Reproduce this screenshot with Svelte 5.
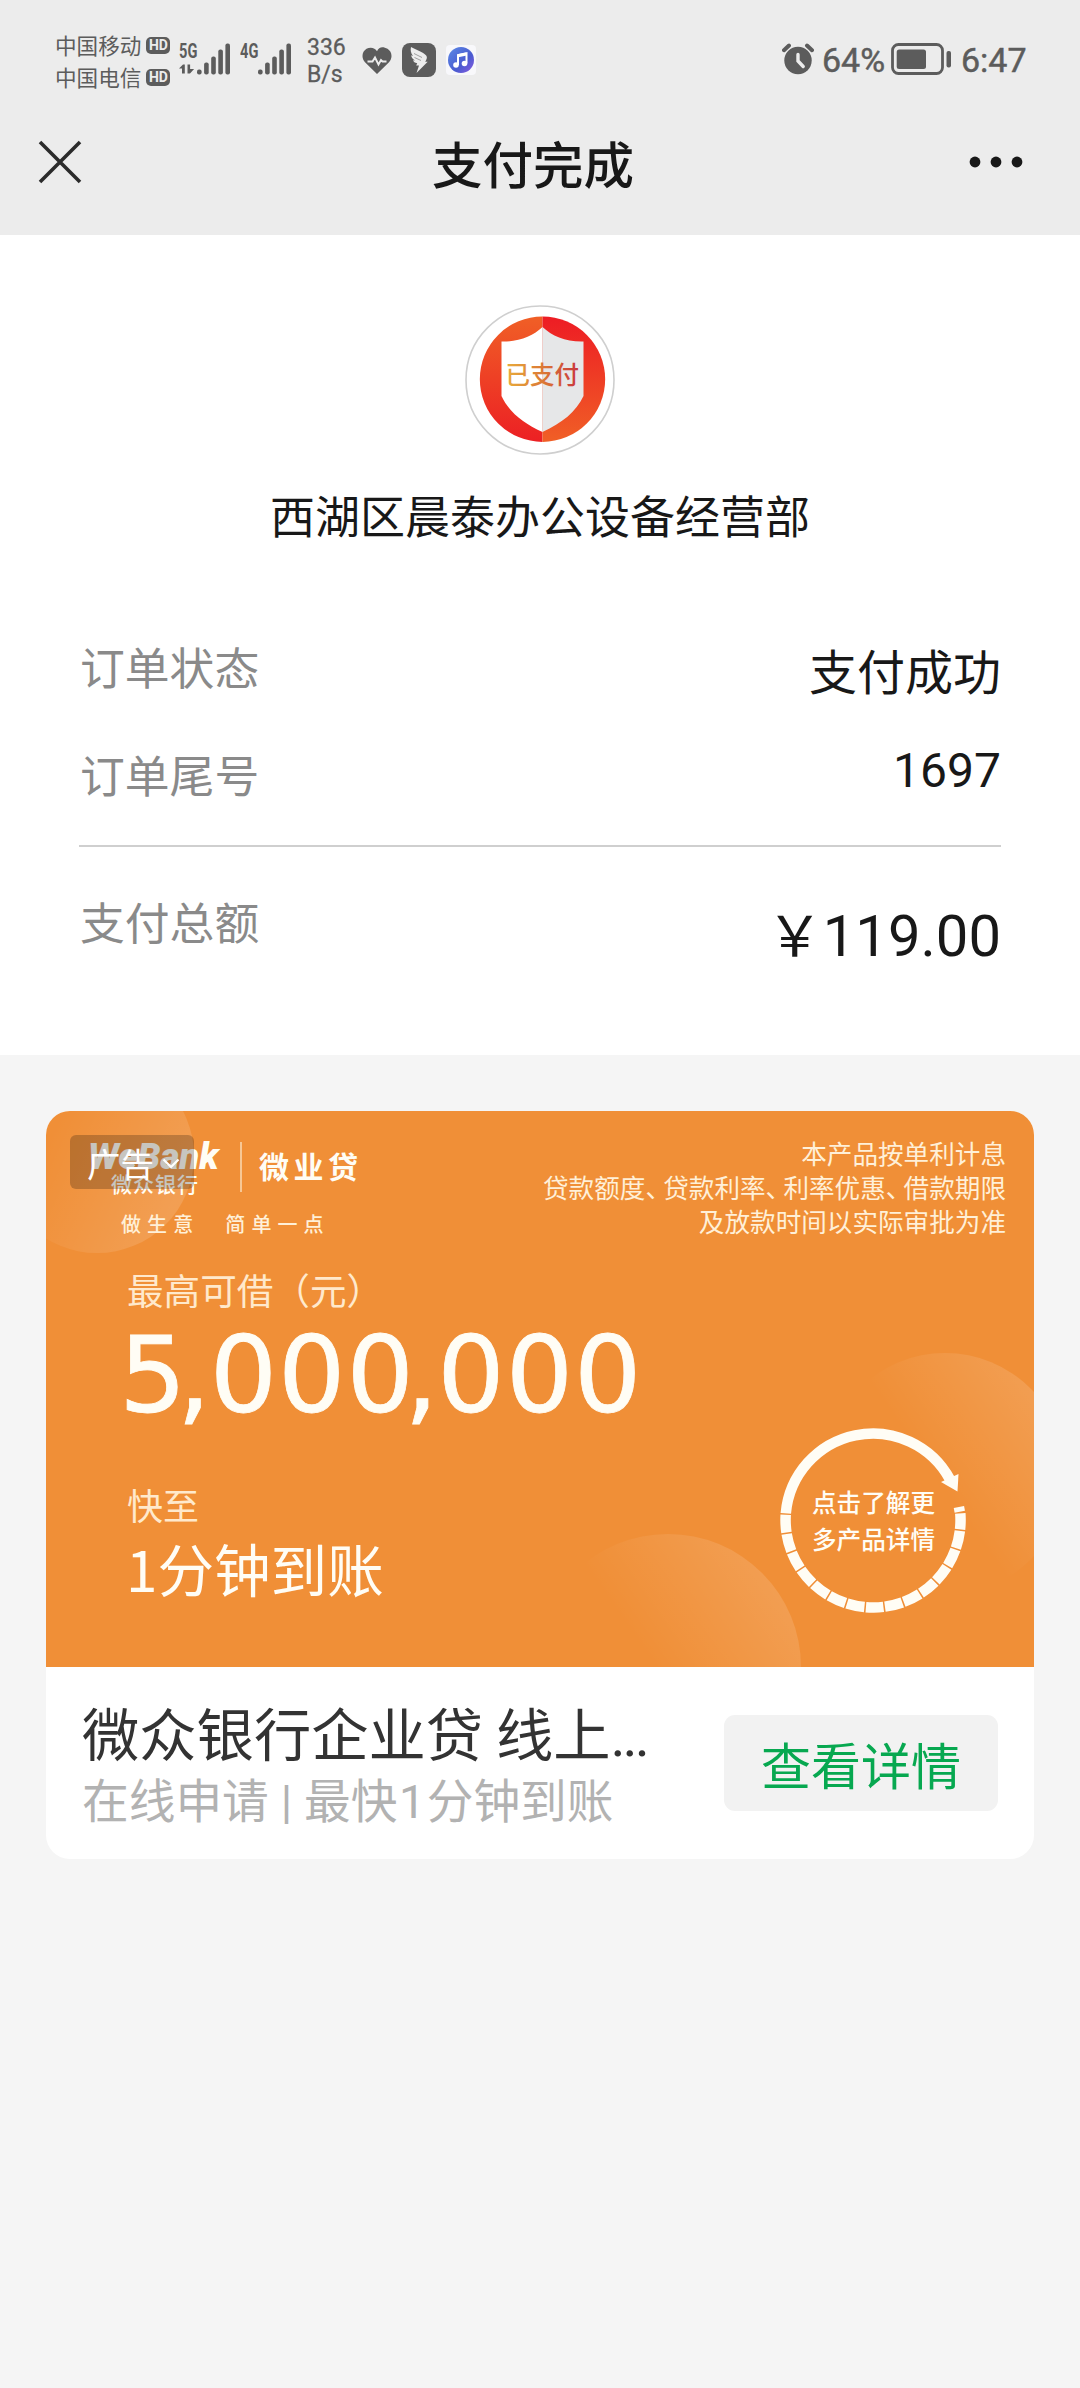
<script>
  const bars = [0, 1, 2, 3, 4];
  const heights = [5, 12, 18, 25, 31];
  const carriers = ['中国移动', '中国电信'];
  const orders = [
    { label: '订单状态', value: '支付成功', kind: 'state' },
    { label: '订单尾号', value: '1697', kind: 'tail' }
  ];
</script>

{#snippet signal()}
  <svg class="signal" width="36" height="32" viewBox="0 0 36 32">
    {#each bars as b}
      <rect x={1 + b * 7.1} y={31.5 - heights[b]} width="4.6" height={heights[b]} rx="2" fill="#5c5c5c" />
    {/each}
  </svg>
{/snippet}

<div class="screen">
  <header>
    <div class="status">
      <div class="carriers">
        {#each carriers as c}
          <div class="carrier"><span>{c}</span><b>HD</b></div>
        {/each}
      </div>
      <div class="net first">
        <span class="gen">5G</span>
        <svg class="updown" width="16" height="10" viewBox="0 0 16 10"><path d="M0 4.5 4 .5h1.8V9.5H3V4.5ZM8.5.5h2.6v4.4h4L11 9.5H8.5Z" fill="#5c5c5c" /></svg>
        {@render signal()}
      </div>
      <div class="net second">
        <span class="gen">4G</span>
        {@render signal()}
      </div>
      <div class="speed"><span>336</span><span>B/s</span></div>
      <svg class="heart" width="30" height="28" viewBox="0 0 30 28">
        <path d="M15 27 3 15.2C-1 11 0 4.500 4.500 1.800 8.500-.5 13 .8 15 4.200 17-.8 21.500-.5 25.500 1.800 30 4.500 31 11 27 15.200Z" fill="#5c5c5c" />
        <path d="M5.500 14.500h5l2.500-4 3.500 7 2.500-4.500 1.500 1.500h4" fill="none" stroke="#ececec" stroke-width="1.900" />
      </svg>
      <svg class="bird" width="34" height="34" viewBox="0 0 34 34">
        <rect width="34" height="34" rx="8" fill="#5c5c5c" />
        <path d="M9 4c5 3 12 5 15.200 8.500 1.600 2 .2 4.200-1 6.200h2.500L14.500 30l2.500-7.500h-2.800l1-2.200c-2.500-.5-3.600-1.500-4.200-3l2 .2c-2.600-1.500-3.600-3.200-3.800-5.200l1.800.8C8.700 10 8.300 7 9 4Z" fill="#ececec" />
        <path d="M12 10.500l8 4M12.500 14.500l6.500 3" stroke="#8a8a8a" stroke-width=".8" />
      </svg>
      <svg class="music" width="30" height="30" viewBox="0 0 30 30">
        <defs><linearGradient id="mg" x1="0" y1="0" x2="1" y2="1"><stop offset="0" stop-color="#5c8ae6" /><stop offset=".6" stop-color="#4a5bd0" /><stop offset="1" stop-color="#8a5be0" /></linearGradient></defs>
        <rect width="30" height="30" rx="4" fill="#f8f8fb" />
        <circle cx="15" cy="15" r="13" fill="url(#mg)" />
        <path d="M12 20V10l8.500-1.800v10" fill="none" stroke="#fff" stroke-width="2" />
        <path d="M12 10.800 20.500 9" stroke="#fff" stroke-width="3" />
        <circle cx="10" cy="20" r="2.800" fill="#fff" /><circle cx="18.500" cy="18.500" r="2.800" fill="#fff" />
      </svg>
      <div class="gap"></div>
      <svg class="alarm" width="32" height="32" viewBox="0 0 32 32">
        <circle cx="16" cy="17.500" r="13.700" fill="#5c5c5c" />
        <path d="M2 7.200 7 2.500M30 7.200 25 2.500" stroke="#5c5c5c" stroke-width="4" stroke-linecap="round" />
        <path d="M16 11.500v6.500l5.200 5.500" fill="none" stroke="#ececec" stroke-width="3.400" stroke-linecap="round" />
      </svg>
      <span class="pct">64%</span>
      <svg class="battery" width="61" height="32" viewBox="0 0 61 32">
        <rect x="1.500" y="1.500" width="50" height="29" rx="6" fill="none" stroke="#5c5c5c" stroke-width="2.800" />
        <rect x="5.700" y="6.500" width="29.300" height="19.500" rx="2.500" fill="#5c5c5c" />
        <rect x="55.500" y="8" width="4.500" height="16.500" rx="2" fill="#5c5c5c" />
      </svg>
      <span class="time">6:47</span>
    </div>
    <div class="nav">
      <svg width="44" height="44" viewBox="0 0 44 44"><path d="M2 2 42 42M42 2 2 42" stroke="#2b2b2b" stroke-width="3.600" /></svg>
      <h1>支付完成</h1>
      <svg width="54" height="12" viewBox="0 0 54 12"><circle cx="6" cy="6" r="5.400" fill="#181818" /><circle cx="27" cy="6" r="5.400" fill="#181818" /><circle cx="48" cy="6" r="5.400" fill="#181818" /></svg>
    </div>
  </header>

  <section class="receipt">
    <svg class="avatar" width="150" height="150" viewBox="0 0 150 150">
      <defs>
        <linearGradient id="left" x1="0" y1="0" x2="0" y2="1"><stop offset="0" stop-color="#f05f26" /><stop offset="1" stop-color="#ec2024" /></linearGradient>
        <linearGradient id="right" x1="0" y1="0" x2="0" y2="1"><stop offset="0" stop-color="#ed1c24" /><stop offset="1" stop-color="#f05f26" /></linearGradient>
        <linearGradient id="word" x1="0" y1="0" x2="1" y2="0"><stop offset="0" stop-color="#e8ac3c" /><stop offset=".5" stop-color="#dc7a35" /><stop offset="1" stop-color="#c9363c" /></linearGradient>
      </defs>
      <circle cx="75" cy="75" r="74" fill="#fff" stroke="#cfcfcf" stroke-width="1.600" />
      <path d="M77.500 11.500a62.700 62.700 0 0 0 0 125.400Z" fill="url(#left)" />
      <path d="M77.500 11.500a62.700 62.700 0 0 1 0 125.400Z" fill="url(#right)" />
      <path d="M77.500 22C68 31 54 37 36.500 36.500V91C44 107 58 118 77.500 127Z" fill="#fff" />
      <path d="M77.500 22C87 31 101 37 118.500 36.500V91C111 107 97 118 77.500 127Z" fill="#e6e7e8" />
      <text x="40.500" y="79" class="paid" fill="url(#word)">已支付</text>
    </svg>
    <h2>西湖区晨泰办公设备经营部</h2>
    <div class="rows">
      {#each orders as o}
        <div class="row"><span class="label">{o.label}</span><span class={o.kind}>{o.value}</span></div>
      {/each}
    </div>
    <div class="row total"><span class="label">支付总额</span><span class="amount"><i>￥</i>119.00</span></div>
  </section>

  <article class="card">
    <div class="banner">
      <svg class="decor" width="988" height="556" viewBox="0 0 988 556">
        <defs>
          <linearGradient id="d1" x1=".35" y1=".2" x2="1" y2=".5"><stop offset="0" stop-color="#fff" stop-opacity="0" /><stop offset="1" stop-color="#fff" stop-opacity=".14" /></linearGradient>
          <linearGradient id="d2" x1=".45" y1=".5" x2=".88" y2=".2"><stop offset="0" stop-color="#fff" stop-opacity="0" /><stop offset="1" stop-color="#fff" stop-opacity=".13" /></linearGradient>
        </defs>
        <circle cx="51" cy="45" r="97" fill="url(#d1)" />
        <circle cx="899" cy="363" r="121" fill="url(#d2)" />
        <circle cx="622" cy="556" r="133" fill="url(#d2)" />
        <g fill="none" stroke="#fffdf5" stroke-width="10.500">
          <path d="M739.800 402.400A87.500 87.500 0 0 1 904 368.500" />
          <path d="M739.700 403.800A87.500 87.500 0 1 0 914.300 402.400" stroke-dasharray="17.800 1.500" />
          <path d="M913.800 400.700 912.900 396" />
        </g>
        <path d="M895 371 912.500 363 911.500 380.500Z" fill="#fffdf5" />
      </svg>
      <div class="head">
        <div class="bank"><strong>WeBank</strong><span>微众银行</span></div>
        <div class="bar"></div>
        <div class="product">微业贷</div>
        <p class="terms">本产品按单利计息<br />贷款额度<i>、</i>贷款利率<i>、</i>利率优惠<i>、</i>借款期限<br />及放款时间以实际审批为准</p>
      </div>
      <p class="slogan"><span>做生意</span><span>简单一点</span></p>
      <p class="max">最高可借（元）</p>
      <p class="sum">5<i>,</i>000<i>,</i>000</p>
      <p class="fast">快至</p>
      <p class="minute">1分钟到账</p>
      <div class="adtag">广告<svg width="18" height="11" viewBox="0 0 18 11"><path d="M1.500 1.500 9 9l7.500-7.500" fill="none" stroke="#fff" stroke-width="2.200" /></svg></div>
      <div class="more">点击了解更<br />多产品详情</div>
    </div>
    <footer>
      <div class="copy"><h3>微众银行企业贷 线上<i>...</i></h3><p>在线申请 <i>|</i> 最快<i>1</i>分钟到账</p></div>
      <button>查看详情</button>
    </footer>
  </article>
</div>

<style>
  :global(body) { margin: 0; background: #f5f5f5; }
  .screen { width: 1080px; height: 2388px; overflow: hidden; background: #f5f5f5; font-family: "Noto Sans CJK SC", sans-serif; color: #181818; }
  h1, h2, h3, p { margin: 0; font-weight: 400; }
  i { font-style: normal; }
  svg { display: block; flex: none; }
  span { white-space: nowrap; }
  header { height: 235px; background: #ececec; }
  .status { height: 120px; display: flex; align-items: flex-start; color: #5c5c5c; padding: 0 54px 0 55px; box-sizing: border-box; }
  .carriers { width: 124px; padding-top: 29px; }
  .carrier { display: flex; height: 32px; align-items: center; font-size: 21.600px; line-height: 32px; }
  .carrier b { font: 700 14px/16px Roboto, sans-serif; color: #ececec; background: #5c5c5c; border-radius: 5px; width: 24px; height: 17px; text-align: center; margin-left: 5px; }
  .net { display: grid; grid-template-columns: 17px 36px; padding-top: 43px; }
  .net .signal { grid-row: 1 / 3; grid-column: 2; }
  .first { width: 61px; }
  .second { width: 67px; }
  .gen { font: 700 20px/16px Roboto, sans-serif; transform: scaleX(.73); transform-origin: left; }
  .updown { grid-row: 2; grid-column: 1; margin-top: 4px; }
  .speed { width: 55px; padding-top: 32px; display: flex; flex-direction: column; font: 400 23px/32px Roboto, sans-serif; -webkit-text-stroke: .3px #5c5c5c; }
  .speed span { height: 27px; }
  .heart { margin-top: 47px; }
  .bird { margin: 43px 0 0 10px; }
  .music { margin: 45px 0 0 10px; }
  .gap { flex: 1; }
  .alarm { margin-top: 43px; }
  .pct, .time { font: 400 34px/40px Roboto, sans-serif; margin-top: 40px; -webkit-text-stroke: .5px #5c5c5c; }
  .pct { width: 69px; margin-left: 8px; }
  .battery { margin-top: 43px; }
  .time { margin-left: 9px; width: 65px; }
  .nav { display: flex; align-items: center; height: 84px; padding: 0 57px 0 38px; justify-content: space-between; }
  .nav h1 { font-size: 50.500px; line-height: 84px; font-weight: 500; padding-left: 15px; }
  .receipt { height: 820px; background: #fff; box-sizing: border-box; padding: 70px 79px 0; }
  .avatar { margin: 0 auto 0 386px; }
  .paid { font: 500 24.500px "Noto Sans CJK SC", sans-serif; }
  .receipt h2 { text-align: center; font-size: 45px; line-height: 60px; margin-top: 30px; }
  .rows { margin-top: 91px; height: 211px; border-bottom: 2px solid #cfcfcf; box-sizing: border-box; }
  .row { display: flex; justify-content: space-between; height: 108px; align-items: flex-start; }
  .label { font-size: 44.800px; line-height: 60px; color: #8a8a8a; margin-left: 1px; }
  .state { font-size: 48px; line-height: 66px; }
  .tail { font: 400 48px/54px Roboto, sans-serif; }
  .total { padding-top: 44px; height: auto; }
  .amount { font: 400 58px/70px Roboto, sans-serif; margin-top: 10px; }
  .amount i { font: 400 56px/60px "Noto Sans CJK SC", sans-serif; }
  .card { width: 988px; height: 748px; margin: 56px auto 0; background: #fff; border-radius: 24px; overflow: hidden; }
  .banner { height: 556px; background: #f08f37; position: relative; color: #fffdf5; box-sizing: border-box; padding: 24px 28px 0 42px; }
  .decor { position: absolute; left: 0; top: 0; }
  .head { display: flex; position: relative; height: 78px; }
  .bank { width: 152px; padding-top: 7px; }
  .bank strong { display: block; font: italic 900 36.500px/30px Roboto, sans-serif; white-space: nowrap; }
  .bank span { display: block; font-size: 21px; line-height: 22px; margin-left: 23px; letter-spacing: 1px; font-weight: 500; }
  .bar { width: 2px; height: 50px; background: #f7c795; margin-top: 7px; }
  .product { font-size: 30px; font-weight: 700; line-height: 40px; letter-spacing: 4.500px; margin: 10px 0 0 17px; white-space: nowrap; }
  .terms { margin-left: auto; text-align: right; font-size: 25.600px; line-height: 34px; color: #fff0d8; padding-top: 1px; white-space: nowrap; }
  .terms i { margin-right: -7.800px; }
  .slogan { position: relative; display: flex; gap: 26px; font-size: 20px; line-height: 22px; height: 26px; letter-spacing: 6.100px; color: #fff0d8; margin-left: 33px; font-weight: 500; }
  .max { position: relative; font-size: 36.600px; line-height: 46px; color: #ffe9cc; margin: 28px 0 0 39px; }
  .sum { position: relative; font: 400 106px/110px "DejaVu Sans", sans-serif; letter-spacing: 1px; margin: 8px 0 0 31px; white-space: nowrap; -webkit-text-stroke: .8px #fffdf5; }
  .sum i { margin: 0 -2px 0 -10.500px; }
  .fast { position: relative; font-size: 36px; line-height: 46px; color: #ffe9cc; margin: 50px 0 0 39px; }
  .minute { position: relative; font-size: 56.600px; line-height: 70px; margin: 5px 0 0 38px; }
  .adtag { position: absolute; left: 24px; top: 24px; width: 124px; height: 54px; box-sizing: border-box; background: rgba(0, 0, 0, .22); border-radius: 6px; display: flex; align-items: center; padding: 2px 0 0 17px; font-size: 33.500px; line-height: 54px; color: #fff; }
  .adtag svg { margin-left: 8px; }
  .more { position: absolute; left: 766px; top: 372px; font-size: 24.600px; line-height: 37px; white-space: nowrap; font-weight: 500; }
  footer { height: 192px; display: flex; justify-content: space-between; padding: 0 36px; box-sizing: border-box; }
  .copy { padding-top: 29px; }
  .copy h3 { font-size: 57.300px; line-height: 72px; color: #333; white-space: nowrap; }
  .copy h3 i { font-family: Roboto, sans-serif; letter-spacing: -3px; }
  .copy p { font-size: 46.700px; line-height: 58px; margin-top: -4px; color: #b2b2b2; white-space: nowrap; }
  .copy p i { font-family: Roboto, sans-serif; margin: 0 1.500px; }
  button { margin-top: 48px; width: 274px; height: 96px; border: 0; border-radius: 11px; background: #f2f2f2; color: #07a850; font: 400 50px/92px "Noto Sans CJK SC", sans-serif; padding: 0; }
</style>
